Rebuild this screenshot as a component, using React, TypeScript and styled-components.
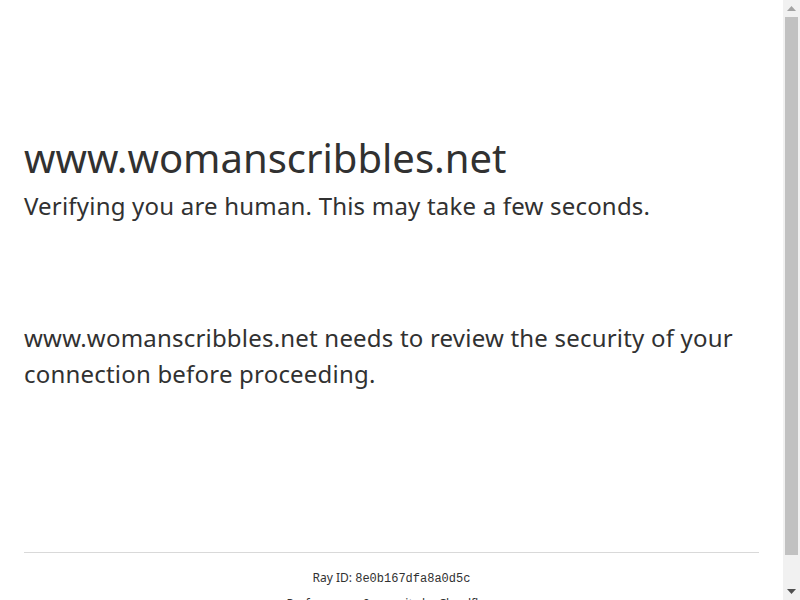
import React from "react";
import styled, { createGlobalStyle } from "styled-components";

const Global = createGlobalStyle`
  html, body { margin: 0; padding: 0; height: 100%; overflow: hidden; }
  body {
    background: #fff;
    color: #313131;
    font-family: "Noto Sans", "Open Sans", sans-serif;
  }
  #root { height: 100%; }
`;

const Shell = styled.div`
  display: flex;
  height: 100vh;
`;

const Viewport = styled.div`
  flex: 1;
  min-width: 0;
  height: 100vh;
  overflow: hidden;
`;

const ScrollBar = styled.div`
  width: 17px;
  flex: 0 0 17px;
  height: 100vh;
  background: #f1f1f1;
  display: flex;
  flex-direction: column;
`;

const ArrowButton = styled.div`
  height: 17px;
  flex: 0 0 17px;
  display: flex;
  align-items: center;
  justify-content: center;
`;

const Track = styled.div`
  flex: 1;
  display: flex;
  flex-direction: column;
`;

const Thumb = styled.div`
  margin: 0 2px;
  height: 538px;
  background: #c1c1c1;
`;

const Page = styled.div`
  display: flex;
  flex-direction: column;
  min-height: 100vh;
`;

const MainWrapper = styled.div`
  display: flex;
  flex: 1;
  flex-direction: column;
  align-items: center;
`;

const MainContent = styled.div`
  margin: 128px auto;
  max-width: 960px;
  padding: 0 24px;
  width: 100%;
  box-sizing: border-box;
`;

const Title = styled.h1`
  margin: 0;
  font-size: 40px;
  font-weight: 400;
  line-height: 60px;
`;

const Subtitle = styled.h2`
  margin: 0;
  font-size: 24px;
  font-weight: 400;
  line-height: 36px;
  letter-spacing: 0.2px;
`;

const Stage = styled.div`
  height: 64px;
`;

const CoreMsg = styled.div`
  margin: 32px 0;
  font-size: 24px;
  line-height: 36px;
  letter-spacing: 0.2px;
`;

const Footer = styled.div`
  font-size: 12px;
  line-height: 18px;
  margin: 0 auto;
  max-width: 960px;
  padding: 0 24px;
  width: 100%;
  box-sizing: border-box;
`;

const FooterInner = styled.div`
  border-top: 1px solid #d9d9d9;
  padding: 16px 0;
  text-align: center;
`;

const FooterLine = styled.div<{ $gap?: number }>`
  margin-top: ${(p) => p.$gap ?? 0}px;
`;

const Code = styled.code`
  font-family: "Liberation Mono", monospace;
  font-size: 12px;
`;

function Arrow({ up }: { up?: boolean }) {
  return (
    <svg width="9" height="5" viewBox="0 0 9 5">
      {up ? (
        <path d="M4.5 0 L9 5 L0 5 Z" fill="#a3a3a3" />
      ) : (
        <path d="M0 0 L9 0 L4.5 5 Z" fill="#505050" />
      )}
    </svg>
  );
}

export default function App() {
  return (
    <>
      <Global />
      <Shell>
        <Viewport>
          <Page>
            <MainWrapper>
              <MainContent>
                <Title>www.womanscribbles.net</Title>
                <Subtitle>Verifying you are human. This may take a few seconds.</Subtitle>
                <Stage />
                <CoreMsg>www.womanscribbles.net needs to review the security of your connection before proceeding.</CoreMsg>
              </MainContent>
            </MainWrapper>
            <Footer>
              <FooterInner>
                <FooterLine>
                  Ray ID: <Code>8e0b167dfa8a0d5c</Code>
                </FooterLine>
                <FooterLine $gap={7}>Performance &amp; security by Cloudflare</FooterLine>
              </FooterInner>
            </Footer>
          </Page>
        </Viewport>
        <ScrollBar>
          <ArrowButton>
            <Arrow up />
          </ArrowButton>
          <Track>
            <Thumb />
          </Track>
          <ArrowButton>
            <Arrow />
          </ArrowButton>
        </ScrollBar>
      </Shell>
    </>
  );
}
